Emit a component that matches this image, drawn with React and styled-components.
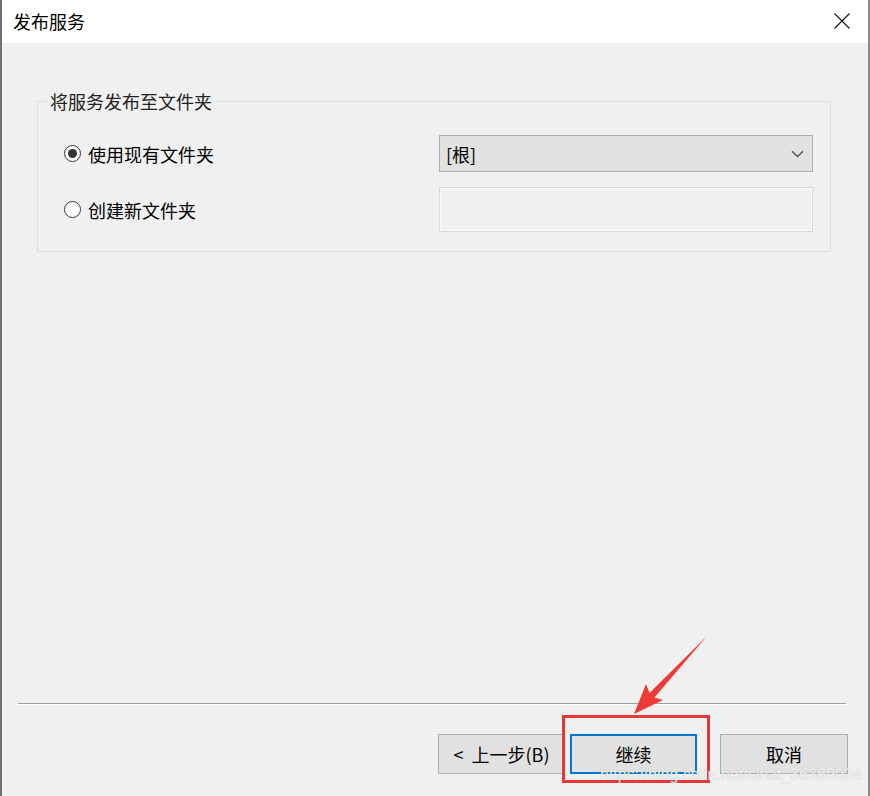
import React from "react";
import styled, { createGlobalStyle } from "styled-components";

const Global = createGlobalStyle`
  html, body {
    margin: 0;
    padding: 0;
    background: #f0f0f0;
  }
  body {
    font-family: "Noto Sans CJK SC", "Microsoft YaHei", sans-serif;
    color: #000;
  }
  * { box-sizing: border-box; }
`;

const Window = styled.div`
  position: relative;
  width: 870px;
  height: 796px;
  display: flex;
  flex-direction: column;
  border-left: 2px solid #707070;
  border-right: 2px solid #8a8a8a;
  background: #f0f0f0;
  overflow: hidden;
`;

const TitleBar = styled.div`
  height: 43px;
  flex: none;
  display: flex;
  align-items: center;
  justify-content: space-between;
  padding: 0 18px 2px 11px;
  background: #fff;
  font-size: 18px;
`;

const CloseButton = styled.span`
  display: flex;
  width: 16px;
  height: 16px;
`;

const Body = styled.div`
  flex: 1;
  display: flex;
  flex-direction: column;
  padding-top: 45px;
`;

const Group = styled.fieldset`
  margin: 0 37px 0 35px;
  padding: 21px 17px 19px 26px;
  border: 1px solid #dcdcdc;
  display: grid;
  grid-template-columns: 1fr 374px;
  row-gap: 15px;
  align-items: center;
`;

const Legend = styled.legend`
  margin-left: -18px;
  padding: 0 4px;
  font-size: 18px;
  line-height: 26px;
  color: #222;
`;

const RadioLabel = styled.label`
  display: flex;
  align-items: center;
  gap: 7px;
  font-size: 18px;
`;

const RadioCircle = styled.span`
  width: 17px;
  height: 17px;
  border-radius: 50%;
  border: 1px solid #333;
  background: #fff;
  display: flex;
  align-items: center;
  justify-content: center;
  &::after {
    content: "";
    width: 9px;
    height: 9px;
    border-radius: 50%;
    background: ${(p) => (p.checked ? "#333" : "transparent")};
  }
`;

const Combo = styled.div`
  height: 37px;
  display: flex;
  align-items: center;
  justify-content: space-between;
  padding: 0 8px 0 6px;
  background: #e1e1e1;
  border: 1px solid #adadad;
  font-size: 18px;
`;

const TextBox = styled.div`
  height: 45px;
  background: #f0f0f0;
  border: 1px solid #d9d9d9;
  box-shadow: inset 0 0 0 1px #fafafa;
`;

const Spacer = styled.div`
  flex: 1;
`;

const Separator = styled.div`
  margin: 0 22px 0 16px;
  height: 2px;
  border-top: 1px solid #a0a0a0;
  border-bottom: 1px solid #fff;
`;

const ButtonRow = styled.div`
  display: flex;
  justify-content: flex-end;
  padding: 29px 20px 22px 0;
`;

const Button = styled.button`
  width: ${(p) => p.w || 128}px;
  height: 40px;
  margin-left: ${(p) => p.gap || 0}px;
  background: #e1e1e1;
  border: ${(p) => (p.primary ? "2px solid #0078d7" : "1px solid #adadad")};
  font-family: "Noto Sans CJK SC", sans-serif;
  font-size: 18px;
  color: #000;
  padding: 0;
  white-space: pre;
`;

const Highlight = styled.div`
  position: absolute;
  left: 560px;
  top: 715px;
  width: 148px;
  height: 68px;
  border: 3px solid #e53935;
`;

const ArrowSvg = styled.svg`
  position: absolute;
  left: 618px;
  top: 630px;
`;

const Watermark = styled.div`
  position: absolute;
  left: 598px;
  top: 766px;
  font-family: "Liberation Sans", Arial, sans-serif;
  font-size: 16px;
  color: rgba(255, 255, 255, 0.85);
  text-shadow: 0 0 1px rgba(120, 120, 120, 0.6);
  white-space: nowrap;
`;

const Chevron = () => (
  <svg width="13" height="8" viewBox="0 0 13 8">
    <path d="M1 1.2 L6.5 6.5 L12 1.2" fill="none" stroke="#555" strokeWidth="1.4" />
  </svg>
);

export default function App() {
  // arrow points in page coords, shifted by the svg offset (618, 630)
  const pts = [
    [705, 636],
    [652.5, 697.5],
    [661, 700],
    [632, 714],
    [644, 684],
    [647.5, 693],
  ]
    .map(([x, y]) => `${x - 618},${y - 630}`)
    .join(" ");

  return (
    <>
      <Global />
      <Window>
        <TitleBar>
          <span>发布服务</span>
          <CloseButton>
            <svg width="16" height="16" viewBox="0 0 16 16">
              <path d="M0.5 0.5 L15.5 15.5 M15.5 0.5 L0.5 15.5" stroke="#111" strokeWidth="1.1" />
            </svg>
          </CloseButton>
        </TitleBar>
        <Body>
          <Group>
            <Legend>将服务发布至文件夹</Legend>
            <RadioLabel>
              <RadioCircle checked />
              使用现有文件夹
            </RadioLabel>
            <Combo>
              <span>[根]</span>
              <Chevron />
            </Combo>
            <RadioLabel>
              <RadioCircle />
              创建新文件夹
            </RadioLabel>
            <TextBox />
          </Group>
          <Spacer />
          <Separator />
          <ButtonRow>
            <Button w={127}>{"<  上一步(B)"}</Button>
            <Button primary w={127} gap={5}>继续</Button>
            <Button w={128} gap={23}>取消</Button>
          </ButtonRow>
        </Body>
        <Highlight />
        <ArrowSvg width="95" height="90">
          <polygon points={pts} fill="#ef3b36" />
        </ArrowSvg>
        <Watermark>https://blog.csdn.net/sinat_36369024</Watermark>
      </Window>
    </>
  );
}
